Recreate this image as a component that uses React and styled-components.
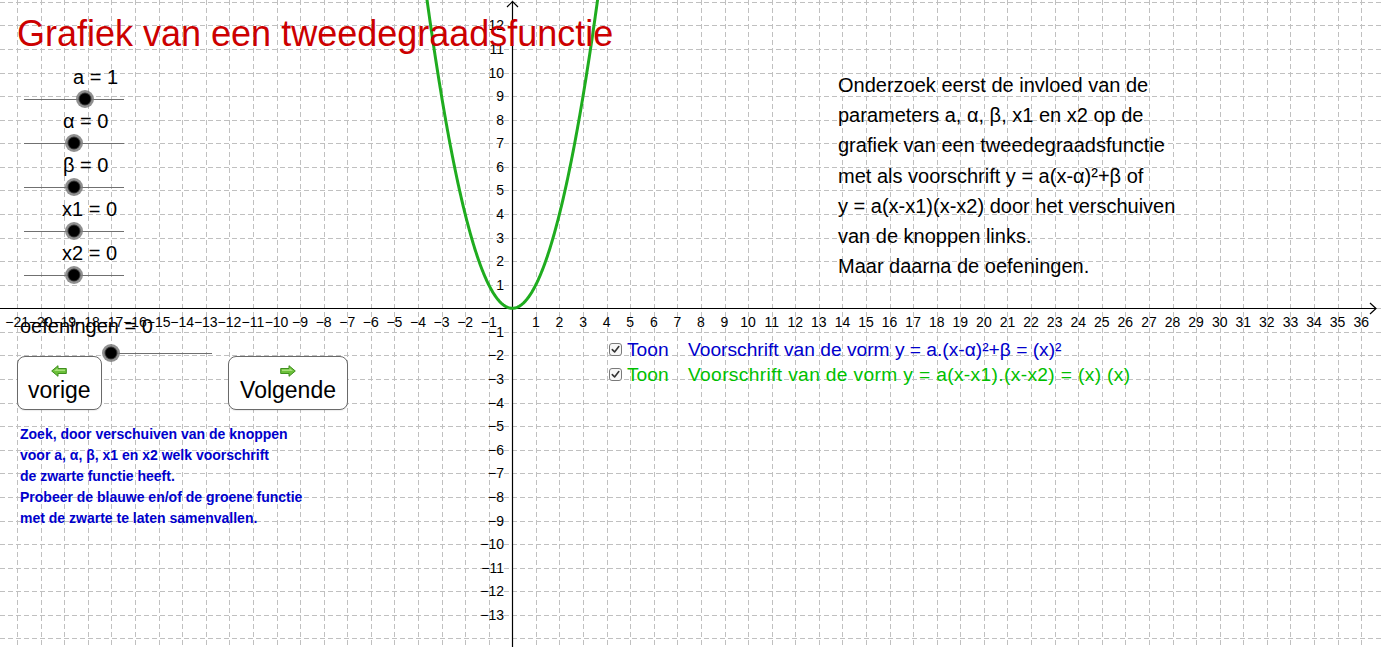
import React from 'react';
import styled, { createGlobalStyle } from 'styled-components';

// graph coordinates (pixels per unit and origin)
const UNIT = 23.58;
const OX = 512.3;
const OY = 308.3;
const W = 1382;
const H = 647;

const GlobalStyle = createGlobalStyle`
  html, body {
    margin: 0;
    padding: 0;
    background: #fff;
  }
  body {
    font-family: "Liberation Sans", Arial, sans-serif;
  }
`;

const Applet = styled.div`
  position: relative;
  width: ${W}px;
  height: ${H}px;
  overflow: hidden;
  background: #fff;
  font-family: "Liberation Sans", Arial, sans-serif;
  color: #000;
`;

const GraphSvg = styled.svg`
  position: absolute;
  left: 0;
  top: 0;
  display: block;
`;

const Widget = styled.div`
  position: absolute;
  left: ${(p) => p.$x}px;
  top: ${(p) => p.$y}px;
`;

const Title = styled.h1`
  margin: 0;
  font-size: 36px;
  line-height: 36px;
  font-weight: normal;
  color: #cc0000;
  white-space: nowrap;
`;

const SliderStack = styled.div`
  display: flex;
  flex-direction: column;
  width: 100px;
`;

const SliderRow = styled.div`
  display: flex;
  flex-direction: column;
  height: 44px;
`;

const SliderLabel = styled.div`
  height: 22px;
  line-height: 22px;
  font-size: 20px;
  padding-left: ${(p) => p.$indent || 0}px;
  white-space: nowrap;
`;

const Track = styled.div`
  position: relative;
  height: ${(p) => p.$h || 22}px;
  width: ${(p) => p.$w}px;
  margin-left: ${(p) => p.$offset || 0}px;
  &::before {
    content: '';
    position: absolute;
    left: 0;
    right: 0;
    top: ${(p) => (p.$h || 22) / 2 - 0.5}px;
    height: 1px;
    background: #707070;
  }
`;

const Knob = styled.span`
  position: absolute;
  top: 50%;
  left: ${(p) => p.$at}px;
  width: 11px;
  height: 11px;
  border-radius: 50%;
  background: #000;
  transform: translate(-50%, -50%);
  box-shadow: 0 0 0 1px #3a3a3a, 0 0 0 3.5px rgba(125, 125, 125, 0.85);
`;

const ButtonRow = styled.div`
  display: flex;
  justify-content: space-between;
  width: 331px;
`;

const NavButton = styled.button`
  display: flex;
  flex-direction: column;
  align-items: center;
  box-sizing: border-box;
  height: 54px;
  padding: 8px ${(p) => p.$pad || 10}px 0;
  border: 1px solid #6a6a6a;
  border-radius: 8px;
  background: #fff;
  font-family: "Liberation Sans", Arial, sans-serif;
  font-size: 23px;
  line-height: 22px;
  color: #000;
  box-shadow: 0 1px 1px rgba(0, 0, 0, 0.08);
  svg {
    display: block;
    margin-bottom: 2px;
  }
`;

const HintText = styled.div`
  font-size: 14px;
  line-height: 21px;
  font-weight: bold;
  color: #0000cc;
  white-space: nowrap;
`;

const Explanation = styled.div`
  font-size: 20px;
  line-height: 30.2px;
  white-space: nowrap;
`;

const Legend = styled.div`
  display: grid;
  grid-template-columns: 13px 56px auto;
  column-gap: 5px;
  grid-auto-rows: 25px;
  font-size: 19.2px;
  line-height: 25px;
  white-space: nowrap;
`;

const CheckBox = styled.span`
  box-sizing: border-box;
  width: 13px;
  height: 13px;
  margin-top: 6px;
  border: 1px solid #7a7a7a;
  border-radius: 3px;
  background: #f7f7f7;
  display: flex;
  align-items: center;
  justify-content: center;
`;

const Colored = styled.span`
  color: ${(p) => p.$color};
  letter-spacing: ${(p) => p.$spread || 0}px;
`;

const range = (a, b) => {
  const out = [];
  for (let i = a; i <= b; i++) out.push(i);
  return out;
};

const minus = (n) => (n < 0 ? '\u2212' + Math.abs(n) : String(n));

const Graph = () => {
  const xTicks = range(-21, 37);
  const yTicks = range(-14, 13);
  const pts = [];
  for (let x = -3.7; x <= 3.7001; x += 0.02) {
    pts.push(`${(OX + x * UNIT).toFixed(2)},${(OY - x * x * UNIT).toFixed(2)}`);
  }
  return (
    <GraphSvg width={W} height={H} viewBox={`0 0 ${W} ${H}`}>
      <g stroke="#c0c0c0" strokeWidth="1" strokeDasharray="5 3">
        {xTicks.map((k) => {
          const x = Math.round(OX + k * UNIT) + 0.5;
          return <line key={'v' + k} x1={x} y1={0} x2={x} y2={H} />;
        })}
        {yTicks.map((k) => {
          const y = Math.round(OY - k * UNIT) + 0.5;
          return <line key={'h' + k} x1={0} y1={y} x2={W} y2={y} />;
        })}
      </g>
      <g stroke="#000" strokeWidth="1.2" fill="none">
        <line x1={0} y1={308.5} x2={1376} y2={308.5} />
        <polyline points="1370,303 1376,308.5 1370,314" />
        <line x1={512.5} y1={H} x2={512.5} y2={1} />
        <polyline points="507,7 512.5,1.5 518,7" />
      </g>
      <g fontFamily="Liberation Sans, Arial, sans-serif" fontSize="14" fill="#000">
        {range(-21, 36)
          .filter((k) => k !== 0)
          .map((k) => (
            <text key={'xl' + k} x={OX + k * UNIT} y={327} textAnchor="middle">
              {minus(k)}
            </text>
          ))}
        {range(-13, 12)
          .filter((k) => k !== 0)
          .map((k) => (
            <text key={'yl' + k} x={504} y={OY - k * UNIT + 5} textAnchor="end">
              {minus(k)}
            </text>
          ))}
      </g>
      <polyline
        points={pts.join(' ')}
        fill="none"
        stroke="#1fac1f"
        strokeWidth="3"
        strokeLinejoin="round"
      />
    </GraphSvg>
  );
};

const ArrowIcon = ({ dir }) => (
  <svg width="16" height="12" viewBox="0 0 16 12">
    <g transform={dir === 'right' ? 'translate(16,0) scale(-1,1)' : undefined}>
      <polygon
        points="0.7,6 7,0.7 7,3.5 15.3,3.5 15.3,8.5 7,8.5 7,11.3"
        fill="#6cc03a"
        stroke="#3f8f1f"
        strokeWidth="1"
        strokeLinejoin="round"
      />
      <polygon points="3,6 6.5,3 6.5,4.6 14,4.6 14,6" fill="#a6e07a" />
    </g>
  </svg>
);

const Check = () => (
  <svg width="9" height="9" viewBox="0 0 9 9">
    <polyline
      points="1.3,4.6 3.6,7 7.8,1.6"
      fill="none"
      stroke="#333"
      strokeWidth="1.6"
      strokeLinecap="round"
      strokeLinejoin="round"
    />
  </svg>
);

const sliders = [
  { label: 'a = 1', indent: 49, at: 61 },
  { label: '\u03b1 = 0', indent: 39, at: 50 },
  { label: '\u03b2 = 0', indent: 39, at: 50 },
  { label: 'x1 = 0', indent: 38, at: 50 },
  { label: 'x2 = 0', indent: 38, at: 50 },
];

const App = () => {
  return (
    <Applet>
      <GlobalStyle />
      <Graph />

      <Widget $x={17} $y={16.2}>
        <Title>Grafiek van een tweedegraadsfunctie</Title>
      </Widget>

      <Widget $x={24} $y={66}>
        <SliderStack>
          {sliders.map((s) => (
            <SliderRow key={s.label}>
              <SliderLabel $indent={s.indent}>{s.label}</SliderLabel>
              <Track $w={100}>
                <Knob $at={s.at} />
              </Track>
            </SliderRow>
          ))}
        </SliderStack>
      </Widget>

      <Widget $x={20} $y={315}>
        <SliderLabel>oefeningen = 0</SliderLabel>
        <Track $w={101} $h={32} $offset={91}>
          <Knob $at={0} />
        </Track>
      </Widget>

      <Widget $x={17} $y={356}>
        <ButtonRow>
          <NavButton>
            <ArrowIcon dir="left" />
            vorige
          </NavButton>
          <NavButton $pad={11}>
            <ArrowIcon dir="right" />
            Volgende
          </NavButton>
        </ButtonRow>
      </Widget>

      <Widget $x={20} $y={423.6}>
        <HintText>
          Zoek, door verschuiven van de knoppen
          <br />
          voor a, α, β, x1 en x2 welk voorschrift
          <br />
          de zwarte functie heeft.
          <br />
          Probeer de blauwe en/of de groene functie
          <br />
          met de zwarte te laten samenvallen.
        </HintText>
      </Widget>

      <Widget $x={838} $y={70}>
        <Explanation>
          Onderzoek eerst de invloed van de
          <br />
          parameters a, α, β, x1 en x2 op de
          <br />
          grafiek van een tweedegraadsfunctie
          <br />
          met als voorschrift y = a(x-α)²+β of
          <br />
          y = a(x-x1)(x-x2) door het verschuiven
          <br />
          van de knoppen links.
          <br />
          Maar daarna de oefeningen.
        </Explanation>
      </Widget>

      <Widget $x={609} $y={337}>
        <Legend>
          <CheckBox>
            <Check />
          </CheckBox>
          <Colored $color="#0000cc">Toon</Colored>
          <Colored $color="#0000cc">Voorschrift van de vorm y = a.(x-α)²+β = (x)²</Colored>
          <CheckBox>
            <Check />
          </CheckBox>
          <Colored $color="#00c000">Toon</Colored>
          <Colored $color="#00c000" $spread={0.35}>
            Voorschrift van de vorm y = a(x-x1).(x-x2) = (x) (x)
          </Colored>
        </Legend>
      </Widget>
    </Applet>
  );
};

export default App;
